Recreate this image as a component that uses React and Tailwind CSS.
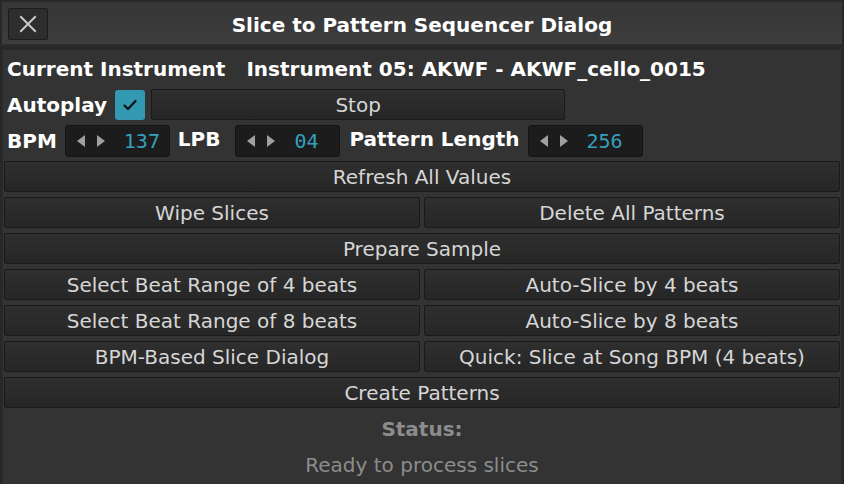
import React from 'react';

// shared look for the flat dark push buttons
const btn =
  'h-[31px] flex items-center justify-center rounded-[2px] border border-[#1a1a1a] bg-gradient-to-b from-[#2f2f2f] to-[#262626] text-[#d6d6d6] text-[20px] leading-none';

const Button = ({ children, className = '' }) => (
  <div className={`${btn} ${className}`}>{children}</div>
);

const Label = ({ children }) => (
  <span className="font-bold text-white text-[20px] leading-none">{children}</span>
);

// number box with the little left/right triangles
const ValueBox = ({ value, width }) => (
  <div
    className={`h-[32px] ${width} flex items-center rounded-[3px] border border-[#151515] bg-[#1c1c1c] pl-[10px]`}
  >
    <svg width="30" height="14" viewBox="0 0 30 14">
      <polygon points="9,1 9,13 1,7" fill="#a0a0a0" />
      <polygon points="21,1 21,13 29,7" fill="#a0a0a0" />
    </svg>
    <span className="ml-[18px] text-[20px] leading-none text-[#35a0bd]" style={{ fontFamily: '"DejaVu Sans Mono", monospace' }}>
      {value}
    </span>
  </div>
);

export default function App() {
  return (
    <div
      className="w-[844px] h-[484px] bg-[#282828] flex flex-col overflow-hidden"
      style={{ fontFamily: '"DejaVu Sans", "Liberation Sans", sans-serif' }}
    >
      {/* title bar */}
      <div className="h-[49px] px-[2px] pt-[2px] pb-[4px] shrink-0">
        <div className="relative h-full flex items-center justify-center pt-[4px] bg-gradient-to-b from-[#363636] to-[#3d3d3d] border-b border-[#2e2e2e]">
          <div className="absolute left-[6px] top-[6px] w-[40px] h-[32px] rounded-[2px] border border-[#1c1c1c] bg-[#2d2d2d] flex items-center justify-center">
            <svg width="18" height="18" viewBox="0 0 18 18">
              <path d="M2 2 L16 16 M16 2 L2 16" stroke="#c8c8c8" strokeWidth="2" strokeLinecap="square" />
            </svg>
          </div>
          <span className="font-bold text-white text-[20px] leading-none">Slice to Pattern Sequencer Dialog</span>
        </div>
      </div>

      {/* body */}
      <div className="mx-[2px] flex-1 mb-[2px] bg-[#333333] border border-[#2a2a2a] px-[1px] pt-[3px] flex flex-col gap-[5px]">
        <div className="h-[31px] flex items-center pl-[3px] gap-[21px]">
          <Label>Current Instrument</Label>
          <Label>Instrument 05: AKWF - AKWF_cello_0015</Label>
        </div>

        <div className="h-[31px] flex items-center pl-[3px]">
          <Label>Autoplay</Label>
          <div className="ml-[8px] w-[30px] h-[30px] rounded-[3px] bg-[#3399b3] flex items-center justify-center">
            <svg width="18" height="18" viewBox="0 0 18 18">
              <path d="M3.5 9.5 L7 13 L14.5 5" stroke="#111" strokeWidth="2.2" fill="none" strokeLinecap="round" strokeLinejoin="round" />
            </svg>
          </div>
          <Button className="ml-[6px] w-[414px]">Stop</Button>
        </div>

        <div className="h-[31px] flex items-center pl-[3px]">
          <Label>BPM</Label>
          <div className="ml-[8px]">
            <ValueBox value="137" width="w-[105px]" />
          </div>
          <div className="ml-[8px]">
            <Label>LPB</Label>
          </div>
          <div className="ml-[15px]">
            <ValueBox value="04" width="w-[105px]" />
          </div>
          <div className="ml-[9px]">
            <Label>Pattern Length</Label>
          </div>
          <div className="ml-[8px]">
            <ValueBox value="256" width="w-[115px]" />
          </div>
        </div>

        <Button>Refresh All Values</Button>
        <div className="grid grid-cols-2 gap-[4px]">
          <Button>Wipe Slices</Button>
          <Button>Delete All Patterns</Button>
        </div>
        <Button>Prepare Sample</Button>
        <div className="grid grid-cols-2 gap-[4px]">
          <Button>Select Beat Range of 4 beats</Button>
          <Button>Auto-Slice by 4 beats</Button>
        </div>
        <div className="grid grid-cols-2 gap-[4px]">
          <Button>Select Beat Range of 8 beats</Button>
          <Button>Auto-Slice by 8 beats</Button>
        </div>
        <div className="grid grid-cols-2 gap-[4px]">
          <Button>BPM-Based Slice Dialog</Button>
          <Button>Quick: Slice at Song BPM (4 beats)</Button>
        </div>
        <Button>Create Patterns</Button>

        {/* status readout */}
        <div className="flex flex-col items-center text-[#8c8c8c] text-[20px] leading-none">
          <div className="h-[32px] flex items-center font-bold">Status:</div>
          <div className="h-[40px] flex items-center">Ready to process slices</div>
        </div>
      </div>
    </div>
  );
}
